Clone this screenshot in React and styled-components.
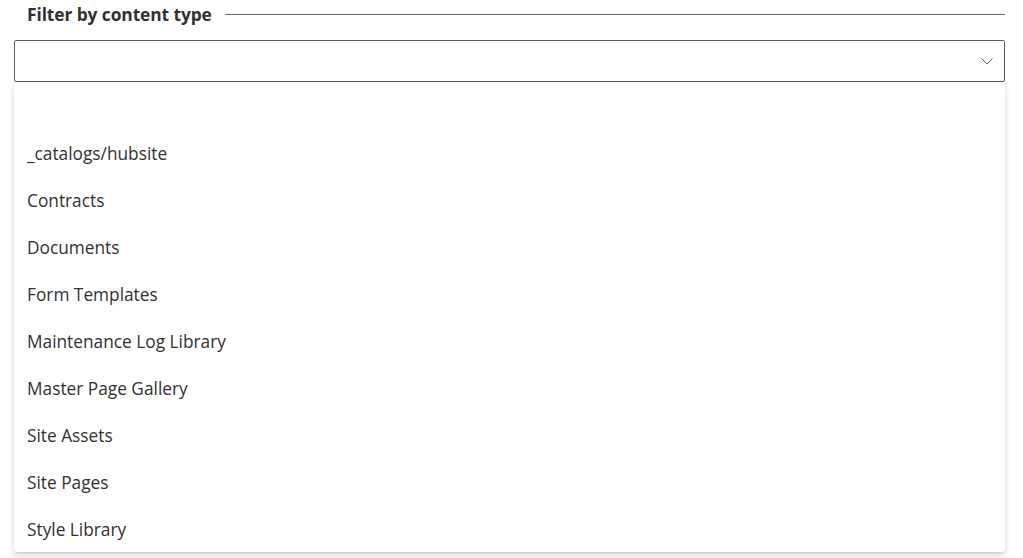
import React from "react";
import styled, { createGlobalStyle } from "styled-components";

const Global = createGlobalStyle`
  html, body { margin: 0; padding: 0; background: #ffffff; }
  body { font-family: "Open Sans", "Noto Sans", sans-serif; color: #323130; }
`;

const Page = styled.div`
  width: 1023px;
  height: 558px;
  overflow: hidden;
  padding: 0 18px 0 14px;
  box-sizing: border-box;
`;

const Legend = styled.div`
  display: flex;
  align-items: center;
  gap: 13px;
  height: 28px;
  padding-left: 13px;
`;

const LegendText = styled.span`
  font-size: 17.4px;
  font-weight: 700;
  color: #323130;
  white-space: nowrap;
  letter-spacing: -0.1px;
`;

const Rule = styled.div`
  flex: 1;
  height: 1px;
  background: #6b6968;
`;

const Field = styled.div`
  margin-top: 12px;
  position: relative;
`;

const Box = styled.div`
  height: 42px;
  box-sizing: border-box;
  border: 1px solid #605e5c;
  border-radius: 2px;
  display: flex;
  align-items: center;
  justify-content: flex-end;
  padding-right: 11px;
`;

const Menu = styled.ul`
  list-style: none;
  margin: 0;
  padding: 0;
  background: #fff;
  border-radius: 0 0 3px 3px;
  box-shadow: 0 3.2px 7.2px rgba(0,0,0,0.13), 0 0.6px 1.8px rgba(0,0,0,0.11);
`;

const Option = styled.li`
  height: 47px;
  box-sizing: border-box;
  padding-top: 2px;
  display: flex;
  align-items: center;
  padding-left: 13px;
  font-size: 17.3px;
  color: #323130;
  white-space: nowrap;
`;

const items = [
  "",
  "_catalogs/hubsite",
  "Contracts",
  "Documents",
  "Form Templates",
  "Maintenance Log Library",
  "Master Page Gallery",
  "Site Assets",
  "Site Pages",
  "Style Library",
];

export default function App() {
  return (
    <Page>
      <Global />
      <Legend>
        <LegendText>Filter by content type</LegendText>
        <Rule />
      </Legend>
      <Field>
        <Box>
          <svg width="12" height="7" viewBox="0 0 12 7" fill="none">
            <path d="M0.5 0.5 L6 6 L11.5 0.5" stroke="#605e5c" strokeWidth="1" />
          </svg>
        </Box>
        <Menu>
          {items.map((t, i) => (
            <Option key={i}>{t}</Option>
          ))}
        </Menu>
      </Field>
    </Page>
  );
}
